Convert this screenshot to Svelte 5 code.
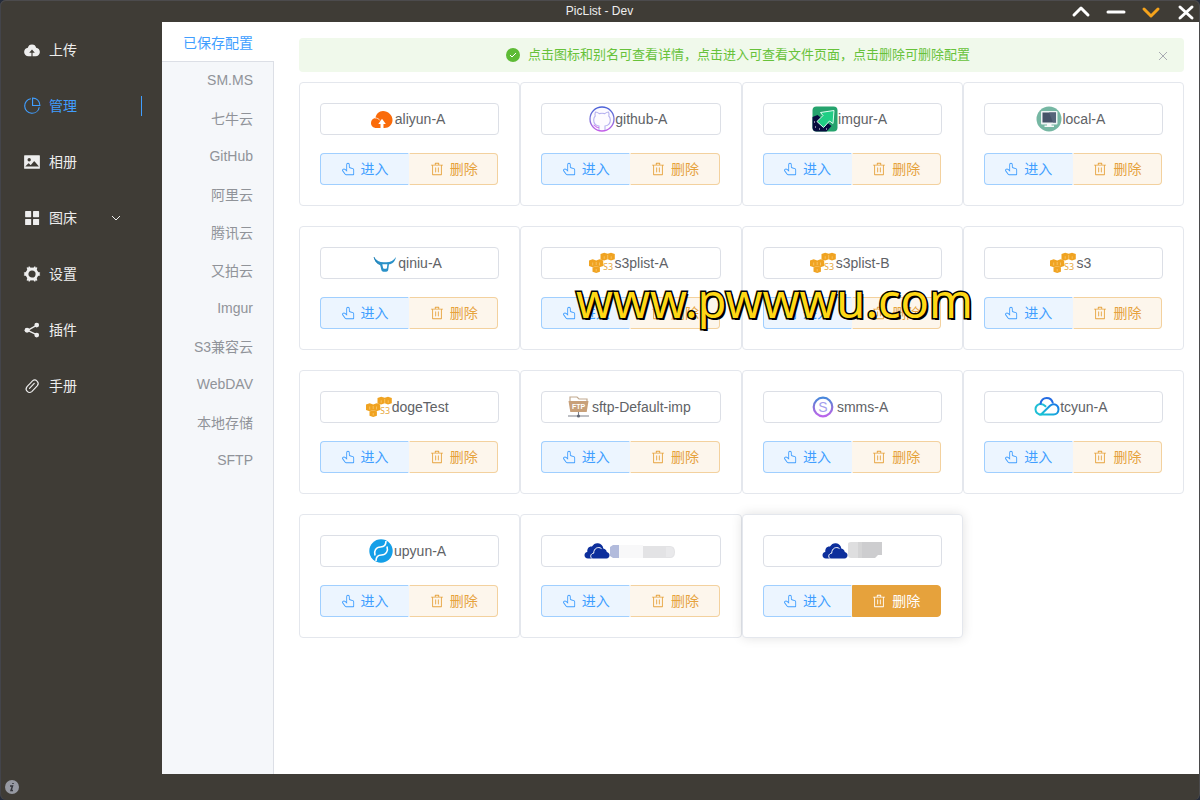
<script>
  const menu = [
    { label: '上传', icon: 'upload' },
    { label: '管理', icon: 'pie' },
    { label: '相册', icon: 'picture' },
    { label: '图床', icon: 'grid', sub: true },
    { label: '设置', icon: 'gear' },
    { label: '插件', icon: 'share' },
    { label: '手册', icon: 'link' }
  ];

  const tabs = ['已保存配置', 'SM.MS', '七牛云', 'GitHub', '阿里云', '腾讯云', '又拍云', 'Imgur', 'S3兼容云', 'WebDAV', '本地存储', 'SFTP'];

  const configs = [
    { name: 'aliyun-A', type: 'aliyun' },
    { name: 'github-A', type: 'github' },
    { name: 'imgur-A', type: 'imgur' },
    { name: 'local-A', type: 'local' },
    { name: 'qiniu-A', type: 'qiniu' },
    { name: 's3plist-A', type: 's3' },
    { name: 's3plist-B', type: 's3' },
    { name: 's3', type: 's3' },
    { name: 'dogeTest', type: 's3' },
    { name: 'sftp-Default-imp', type: 'sftp' },
    { name: 'smms-A', type: 'smms' },
    { name: 'tcyun-A', type: 'tcyun' },
    { name: 'upyun-A', type: 'upyun' },
    { name: '', type: 'webdav', mask: 'long' },
    { name: '', type: 'webdav', mask: 'short', hot: true }
  ];

  let activeMenu = $state('管理');
  let activeTab = $state('已保存配置');
  let showTip = $state(true);
</script>

{#snippet menuIcon(icon)}
  <svg class="menu-icon" viewBox="0 0 1024 1024" fill="currentColor" aria-hidden="true">
    {#if icon === 'upload'}
      <path d="M544 864V672h128L512 480 352 672h128v192H320v-1.600c-5.376.32-10.496 1.600-16 1.600A240 240 0 0 1 64 624c0-123.136 93.120-223.488 212.608-237.248A239.808 239.808 0 0 1 512 192a239.872 239.872 0 0 1 235.456 194.752c119.488 13.760 212.480 114.112 212.480 237.248a240 240 0 0 1-240 240c-5.376 0-10.560-1.280-16-1.600v1.600H544z" />
    {:else if icon === 'pie'}
      <path d="M448 68.480v64.832A384.128 384.128 0 0 0 512 896a384.128 384.128 0 0 0 378.688-320h64.768A448.128 448.128 0 0 1 64 512 448.128 448.128 0 0 1 448 68.480z" />
      <path d="M576 97.280V448h350.720A384.064 384.064 0 0 0 576 97.280zM512 64V33.152A448 448 0 0 1 990.848 512H512V64z" />
    {:else if icon === 'picture'}
      <path d="M96 896a32 32 0 0 1-32-32V160a32 32 0 0 1 32-32h832a32 32 0 0 1 32 32v704a32 32 0 0 1-32 32H96zm315.520-228.480-68.928-68.928a32 32 0 0 0-45.248 0L128 768.064h778.688l-242.112-290.560a32 32 0 0 0-49.216 0L458.752 665.408a32 32 0 0 1-47.232 2.112zM256 384a96 96 0 1 0 192.064-.064A96 96 0 0 0 256 384z" />
    {:else if icon === 'grid'}
      <rect x="120" y="120" width="345" height="345" rx="32" />
      <rect x="570" y="120" width="345" height="345" rx="32" />
      <rect x="120" y="570" width="345" height="345" rx="32" />
      <rect x="570" y="570" width="345" height="345" rx="32" />
    {:else if icon === 'gear'}
      <circle cx="512" cy="512" r="285" fill="none" stroke="currentColor" stroke-width="160" />
      {#each [0, 60, 120, 180, 240, 300] as deg}
        <path d="M395 200l30-150h50l37 50 37-50h50l30 150z" transform="rotate({deg + 30} 512 512)" />
      {/each}
    {:else if icon === 'share'}
      <path d="M260 530L770 250M260 530l510 250" fill="none" stroke="currentColor" stroke-width="76" />
      <circle cx="230" cy="530" r="140" />
      <circle cx="780" cy="230" r="134" />
      <circle cx="780" cy="800" r="134" />
    {:else if icon === 'link'}
      <g fill="none" stroke="currentColor" stroke-width="66" stroke-linecap="round">
        <path d="M370 400l170-180a196 196 0 0 1 280 270L650 670M640 360L370 650M620 700l-120 130a196 196 0 0 1-280-270l130-140" />
      </g>
    {/if}
  </svg>
{/snippet}

{#snippet brand(type)}
  <svg class="brand" viewBox="0 0 26 26" aria-hidden="true">
    {#if type === 'aliyun'}
      <path d="M7.500 22C4 22 2 19.700 2 17c0-2.800 2-4.700 4.500-5C7 8 10 5 14 5c5 0 9.500 4 9.500 9 0 4.600-3.600 8-8 8h-1v-4h2.300L13 12.700 9.300 18h2.200v4z" fill="#fa6b0a" />
      <path d="M6 12c2.400-.1 4 1 5 2.500" fill="none" stroke="#fff" stroke-width=".7" />
    {:else if type === 'github'}
      <defs>
        <linearGradient id="gh" x1="0" y1="0" x2="0" y2="1">
          <stop offset="0" stop-color="#4b62d8" /><stop offset=".5" stop-color="#7974d8" /><stop offset="1" stop-color="#c45de8" />
        </linearGradient>
      </defs>
      <circle cx="13" cy="13" r="12" fill="#fdfbff" stroke="url(#gh)" stroke-width="1.300" />
      <path d="M10 24v-4c-4-.5-5.300-3-5.300-6 0-1.800.5-3 1.500-4-.4-1.500-.2-3 .3-4 1.700 0 2.700.8 3.700 1.600 1.800-.5 3.800-.5 5.600 0 1-.8 2-1.600 3.700-1.600.5 1 .7 2.500.3 4 1 1 1.500 2.200 1.500 4 0 3-1.300 5.500-5.300 6v4" fill="none" stroke="#b6b2ef" stroke-width="1.100" />
      <path d="M4.500 19c2 0 2 3 5.500 2.600" fill="none" stroke="#d07af0" stroke-width="1.200" />
    {:else if type === 'imgur'}
      <rect x=".5" y=".5" width="25" height="25" rx="4" fill="#25a36d" />
      <path d="M.5 11l5-2 14 11-5 5.500H4.500a4 4 0 0 1-4-4z" fill="#070c3e" />
      <path d="M8.500 6.500L22 4.500 21 17.500l-3.500-2.500-6 6.500-6.500-6L11 9.500z" fill="#20ce85" stroke="#ddfff0" stroke-width="1" stroke-linejoin="round" />
      <path d="M2 16h1M3 21h1M7 23h1M14 23h1" stroke="#fff" stroke-width="1" />
    {:else if type === 'local'}
      <circle cx="13" cy="13" r="12.500" fill="#76b7a3" />
      <rect x="5" y="5" width="16.500" height="13.500" rx="1" fill="#eef4f4" />
      <rect x="6.500" y="6.500" width="13.500" height="10" fill="#465369" />
      <path d="M13 6.500h7v10h-3z" fill="#56647a" />
      <path d="M11 18h4.500v1.500H18V21H8.500v-1.500H11z" fill="#f6f9f9" />
    {:else if type === 'qiniu'}
      <path d="M2 7c2.500 4 6 5.500 11 5.200C18 12.500 21.500 11 24 7c-1 5-4 7.200-7 7.300L16.200 20c-.3 1.200-1 1.700-2 1.700h-2.800c-1 0-1.700-.6-2-1.700L8 14.300C5 14 2.700 11.500 2 7z" fill="#2a91c8" />
      <path d="M10.300 14.200l.8 3.800c.1.500.4.800.9.800h2c.6 0 .8-.3.900-.8l.5-3.800z" fill="#fff" />
      <path d="M2 7c1 4 3 6.500 6.500 8" fill="none" stroke="#1b78ae" stroke-width=".8" />
    {:else if type === 's3'}
      <g fill="#f0a321">
        <path d="M11.500 4l3.700-1.200 3.500 1v5.400l-3.500 1.200-3.700-1zM18.700 3.800l3.300-1 3.800 1.200v5.200l-3.800 1.200-3.300-1.200zM0 10.600l3.700-1.300 3.500 1.100v5.600l-3.500 1.300L0 16zM7.200 10.400l3.300-1.100 3.700 1.200V16l-3.700 1.300L7.200 16zM3.500 17.500l3.700-1.200 3.700 1.200v4.200l-3.700 1.400-3.700-1.300z" />
      </g>
      <path d="M15.200 6.300v2.500M22.200 6.300v2.500M3.700 12.500v3M10.500 12.500v3M7.200 19v2.500M18.700 5v4M7.200 12v3" fill="none" stroke="#ffd588" stroke-width=".6" />
      <text x="14" y="20" class="s3-text">S3</text>
    {:else if type === 'sftp'}
      <path d="M4 8V3h7l2 2h8v3" fill="none" stroke="#c2aa90" stroke-width="1.200" />
      <path d="M2.500 7h20l-1.800 11H4.300z" fill="#c8a079" />
      <path d="M12.500 18v4M2 22h21" stroke="#7e818b" stroke-width="1.100" />
      <circle cx="12.500" cy="22" r="1.600" fill="#626876" />
      <text x="12.500" y="15" class="ftp-text">FTP</text>
    {:else if type === 'smms'}
      <defs>
        <linearGradient id="sm" x1="0" y1="0" x2="0" y2="1">
          <stop offset="0" stop-color="#4788dc" /><stop offset=".5" stop-color="#8875d8" /><stop offset="1" stop-color="#bb65ec" />
        </linearGradient>
      </defs>
      <circle cx="12" cy="13" r="9.300" fill="#fff" stroke="url(#sm)" stroke-width="2.200" />
      <text x="12" y="18" class="sm-text">S</text>
    {:else if type === 'tcyun'}
      <defs>
        <linearGradient id="tc" x1="0" y1="1" x2="1" y2="0">
          <stop offset="0" stop-color="#16c5d4" /><stop offset="1" stop-color="#1976e8" />
        </linearGradient>
      </defs>
      <g fill="none" stroke-width="2" stroke-linecap="round">
        <path d="M7 20.500c-3.300 0-5.500-2.300-5.500-5.200 0-3 2.200-5.300 5.200-5.300 2 0 3.500.8 4.800 2.200" stroke="#20bfd5" />
        <path d="M6.500 9.800C7.200 6 9.600 4 12.700 4c3 0 5.200 1.800 6 4.600" stroke="#256ce2" />
        <path d="M7 20.500l9-8.700c3.500-3.200 8.500-1.200 8.500 3.500 0 3-2 5.200-5 5.200z" stroke="url(#tc)" />
      </g>
    {:else if type === 'upyun'}
      <circle cx="13" cy="13" r="11.700" fill="#149fe8" />
      <path d="M7 17.500c-1.500-4.500 1-8.500 5.500-8.500 3 0 5.500-1.500 5.500-6" fill="none" stroke="#fff" stroke-width="1.600" />
      <path d="M19 8.500c1.500 4.500-1 8.500-5.500 8.500-3 0-5.500 1.500-5.500 6" fill="none" stroke="#fff" stroke-width="1.600" />
    {:else if type === 'webdav'}
      <path d="M4 20.500C1.800 20.500.5 19 .5 17.200c0-1.700 1.200-3 2.800-3.200C3 10.500 5 8.200 8 8.600 9.500 6.200 11.500 5 14 5.300c3 .3 5 2.300 5.300 5.200 2 .2 3.200 1.700 3.500 3.600 1.700.3 2.700 1.700 2.700 3.200 0 1.900-1.200 3.200-3 3.200z" fill="#0d2f9c" />
      <path d="M8 20.600c-2.200-1.700-1.500-5 1.700-5.400C9.700 10.500 14 8 17.500 10.600" fill="none" stroke="#fff" stroke-width="1" />
    {/if}
  </svg>
{/snippet}

<div class="window">
  <header class="titlebar">
    <h1>PicList - Dev</h1>
    <div class="controls">
      <button aria-label="置顶"><svg viewBox="0 0 20 20"><path d="M3 14l7-7 7 7" /></svg></button>
      <button aria-label="最小化"><svg viewBox="0 0 20 20"><path d="M2 11h16" /></svg></button>
      <button aria-label="迷你窗口" class="mini"><svg viewBox="0 0 20 20"><path d="M3 8l7 7 7-7" /></svg></button>
      <button aria-label="关闭"><svg viewBox="0 0 20 20"><path d="M4 6l12 11M16 6L4 17" /></svg></button>
    </div>
  </header>

  <div class="body">
    <nav class="sidebar">
      {#each menu as item}
        <button class="menu-item" class:active={activeMenu === item.label} onclick={() => (activeMenu = item.label)}>
          {@render menuIcon(item.icon)}
          <span>{item.label}</span>
          {#if item.sub}
            <svg class="arrow" viewBox="0 0 12 12" aria-hidden="true"><path d="M2 4l4 4 4-4" /></svg>
          {/if}
        </button>
      {/each}
    </nav>

    <main>
      <div class="tabs" role="tablist">
        {#each tabs as tab}
          <button class="tab" role="tab" aria-selected={activeTab === tab} class:active={activeTab === tab} onclick={() => (activeTab = tab)}>{tab}</button>
        {/each}
      </div>

      <section class="content">
        {#if showTip}
          <div class="tip">
            <svg class="tip-icon" viewBox="0 0 16 16" aria-hidden="true">
              <circle cx="8" cy="8" r="7" />
              <path d="M5 8l2 2 4-4" />
            </svg>
            <p>点击图标和别名可查看详情，点击进入可查看文件页面，点击删除可删除配置</p>
            <button class="tip-close" aria-label="关闭提示" onclick={() => (showTip = false)}>
              <svg viewBox="0 0 12 12"><path d="M2 3l8 8M10 3l-8 8" /></svg>
            </button>
          </div>
        {/if}

        <div class="grid">
          {#each configs as config}
            <article class="card" class:hot={config.hot}>
              <button class="name" class:masked={config.mask} aria-label={config.name || config.type}>
                {@render brand(config.type)}
                {#if config.mask === 'long'}
                  <svg class="mask-long" viewBox="0 0 66 14" aria-hidden="true">
                    <path d="M0 3l3-2h6v13H3l-3-2z" fill="#b2bbdc" />
                    <path d="M9 1h24v13H9z" fill="#f8f8f9" />
                    <path d="M33 2h27q5 0 5 6t-5 6H33z" fill="#e3e3e5" />
                    <path d="M56 3h4q4 0 4 5t-4 5h-4z" fill="#e9e9eb" />
                  </svg>
                {:else if config.mask === 'short'}
                  <svg class="mask-short" viewBox="0 0 34 18" aria-hidden="true">
                    <path d="M0 2q0-2 3-2h7v16H3q-3 0-3-3z" fill="#dededf" />
                    <path d="M10 0h24v13h-4l-3 3H10z" fill="#cdcdcf" />
                    <path d="M10 0h4v16h-4z" fill="#d4d4d5" />
                  </svg>
                {:else}
                  <span>{config.name}</span>
                {/if}
              </button>
              <div class="actions">
                <button class="enter">
                  <svg viewBox="0 0 1024 1024" aria-hidden="true">
                    <path d="M511.552 128c-35.584 0-64.384 28.800-64.384 64.448v516.480L274.048 570.880a94.272 94.272 0 0 0-112.896-3.456 44.416 44.416 0 0 0-8.960 62.208L332.800 870.400A64 64 0 0 0 384 896h512V575.232a64 64 0 0 0-45.632-61.312l-205.952-61.760A96 96 0 0 1 576 360.192V192.448C576 156.800 547.200 128 511.552 128zM359.040 556.800l24.128 19.200V192.448a128.448 128.448 0 1 1 256.832 0v167.744a32 32 0 0 0 22.784 30.656l206.016 61.760A128 128 0 0 1 960 575.232V896a64 64 0 0 1-64 64H384a128 128 0 0 1-102.400-51.200L101.056 668.032A108.416 108.416 0 0 1 128 512.512a158.272 158.272 0 0 1 185.984 8.320L359.040 556.800z" />
                  </svg>
                  <span>进入</span>
                </button>
                <button class="delete">
                  <svg viewBox="0 0 1024 1024" aria-hidden="true">
                    <path d="M160 256H96a32 32 0 0 1 0-64h256V95.936a32 32 0 0 1 32-32h256a32 32 0 0 1 32 32V192h256a32 32 0 1 1 0 64h-64v672a32 32 0 0 1-32 32H192a32 32 0 0 1-32-32V256zm448-64v-64H416v64h192zM224 896h576V256H224v640zm192-128a32 32 0 0 1-32-32V416a32 32 0 0 1 64 0v320a32 32 0 0 1-32 32zm192 0a32 32 0 0 1-32-32V416a32 32 0 0 1 64 0v320a32 32 0 0 1-32 32z" />
                  </svg>
                  <span>删除</span>
                </button>
              </div>
            </article>
          {/each}
        </div>
      </section>
    </main>
  </div>

  <footer>
    <button class="info" aria-label="关于">
      <svg viewBox="0 0 14 14">
        <circle cx="7" cy="7" r="7" />
        <path d="M5 6h2.500L6 10.500h2M8 3v1" />
      </svg>
    </button>
  </footer>

  <div class="watermark">www.pwwwu.com</div>
</div>

<style>
  :global(body) {
    background: #252c3b;
  }

  .window {
    position: relative;
    box-sizing: border-box;
    display: flex;
    flex-direction: column;
    min-height: 100vh;
    background: #3f3c36;
    border-right: 1px solid #4a4a4c;
    border-radius: 6px;
    box-shadow: inset 0 1px #4c4b4d, inset 1px 0 #43444a;
    font-family: "Liberation Sans", "Noto Sans CJK SC", sans-serif;
    font-size: 14px;
  }

  button {
    padding: 0;
    border: 0;
    background: none;
    color: inherit;
    font: inherit;
    cursor: pointer;
  }

  .titlebar {
    display: grid;
    grid-template-columns: 1fr auto 1fr;
    align-items: center;
    height: 22px;
    color: #eee;
  }

  h1 {
    grid-column: 2;
    margin: 0;
    font-size: 12px;
    font-weight: normal;
  }

  .controls {
    display: flex;
    justify-content: flex-end;
    gap: 15px;
    padding-right: 3px;
  }

  .controls button {
    width: 20px;
    height: 22px;
  }

  .controls svg {
    display: block;
    width: 20px;
    height: 20px;
    fill: none;
    stroke: #fff;
    stroke-width: 3;
    stroke-linecap: round;
    stroke-linejoin: round;
  }

  .controls .mini svg {
    stroke: #f5a31c;
  }

  .body {
    flex: 1;
    display: flex;
  }

  .sidebar {
    flex: none;
    width: 142px;
    margin-right: 20px;
  }

  .menu-item {
    display: flex;
    align-items: center;
    width: 100%;
    height: 56px;
    padding: 0 20px 0 23px;
    color: #eee;
    text-align: left;
  }

  .menu-item span,
  .actions span {
    padding-bottom: 2px;
  }

  .menu-item.active {
    color: #409eff;
  }

  .menu-item.active::after {
    content: "";
    width: 1px;
    height: 20px;
    margin: 0 -20px 0 auto;
    background: #409eff;
  }

  .menu-icon {
    width: 18px;
    height: 18px;
    margin-right: 8px;
  }

  .arrow {
    width: 12px;
    height: 12px;
    margin-left: auto;
    fill: none;
    stroke: currentColor;
  }

  main {
    flex: 1;
    display: flex;
    min-width: 0;
    background: #fff;
  }

  .tabs {
    flex: none;
    box-sizing: border-box;
    display: flex;
    flex-direction: column;
    width: 112px;
    background: #f5f7fa;
    border-right: 1px solid #dcdfe6;
  }

  .tab {
    height: 38px;
    padding: 0 20px 2px 0;
    color: #909399;
    text-align: right;
  }

  .tab.active {
    height: 40px;
    margin-right: -1px;
    padding: 0 21px 0 0;
    background: #fff;
    border-bottom: 1px solid #dcdfe6;
    color: #409eff;
  }

  .content {
    flex: 1;
    min-width: 0;
    padding: 16px 15px 0 25px;
  }

  .tip {
    display: flex;
    align-items: center;
    justify-content: center;
    position: relative;
    height: 34px;
    margin-bottom: 10px;
    padding-right: 8px;
    background: #f0f9eb;
    border-radius: 4px;
    color: #67c23a;
    font-size: 13px;
  }

  .tip p {
    margin: 0;
    padding-bottom: 4px;
  }

  .tip-icon {
    width: 16px;
    height: 16px;
    margin-right: 7px;
  }

  .tip-icon circle {
    fill: #5dbb35;
  }

  .tip-icon path {
    fill: none;
    stroke: #fff;
  }

  .tip-close {
    position: absolute;
    right: 15px;
    width: 12px;
    height: 12px;
  }

  .tip-close svg {
    display: block;
    fill: none;
    stroke: #a8abb2;
  }

  .grid {
    display: grid;
    grid-template-columns: repeat(4, 1fr);
    row-gap: 20px;
  }

  .card {
    display: flex;
    flex-direction: column;
    gap: 18px;
    min-width: 0;
    padding: 20px;
    background: #fff;
    border: 1px solid #e4e7ed;
    border-radius: 4px;
  }

  .card.hot {
    box-shadow: 0 0 12px rgba(0, 0, 0, 0.12);
  }

  .name {
    box-sizing: border-box;
    display: flex;
    align-items: center;
    justify-content: center;
    height: 32px;
    padding-right: 5px;
    border: 1px solid #dcdfe6;
    border-radius: 4px;
    color: #606266;
    white-space: nowrap;
  }

  .name.masked {
    padding-right: 1px;
  }

  .brand {
    flex: none;
    width: 26px;
    height: 26px;
  }

  .s3-text {
    fill: #e7a83c;
    font-family: "Noto Sans", sans-serif;
    font-size: 9px;
  }

  .ftp-text {
    fill: #fff;
    font-size: 7px;
    font-weight: bold;
    text-anchor: middle;
  }

  .sm-text {
    fill: #a4a0ed;
    font-size: 14px;
    text-anchor: middle;
  }

  .mask-long {
    width: 66px;
    height: 14px;
  }

  .mask-short {
    width: 34px;
    height: 18px;
  }

  .actions {
    display: grid;
    grid-template-columns: 1fr 1fr;
    padding-right: 1px;
  }

  .actions button {
    display: flex;
    align-items: center;
    justify-content: center;
    gap: 6px;
    box-sizing: border-box;
    height: 32px;
    border: 1px solid;
  }

  .actions svg {
    width: 14px;
    height: 14px;
    fill: currentColor;
  }

  .actions .enter {
    background: #ecf5ff;
    border-color: #a0cfff;
    border-right-color: #ecf5ff;
    border-radius: 4px 0 0 4px;
    color: #409eff;
  }

  .actions .delete {
    background: #fdf6ec;
    border-color: #f3d19e;
    border-left-color: #fdf6ec;
    border-radius: 0 4px 4px 0;
    color: #e6a23c;
  }

  .actions .delete:hover,
  .hot .actions .delete {
    background: #e6a23c;
    border-color: #e6a23c;
    color: #fff;
  }

  footer {
    display: flex;
    align-items: center;
    height: 26px;
    padding-left: 5px;
  }

  .info {
    width: 14px;
    height: 14px;
  }

  .info svg {
    display: block;
    fill: #9699a2;
  }

  .info path {
    fill: none;
    stroke: #34353b;
    stroke-width: 1.500;
  }

  .watermark {
    position: absolute;
    top: 270px;
    left: 576px;
    color: #ffd815;
    font-family: "Noto Sans", "Open Sans", sans-serif;
    font-size: 47px;
    font-weight: 400;
    line-height: 60px;
    paint-order: stroke;
    -webkit-text-stroke: 3px #000;
    text-shadow: 2px 2px #000;
    pointer-events: none;
  }
</style>
